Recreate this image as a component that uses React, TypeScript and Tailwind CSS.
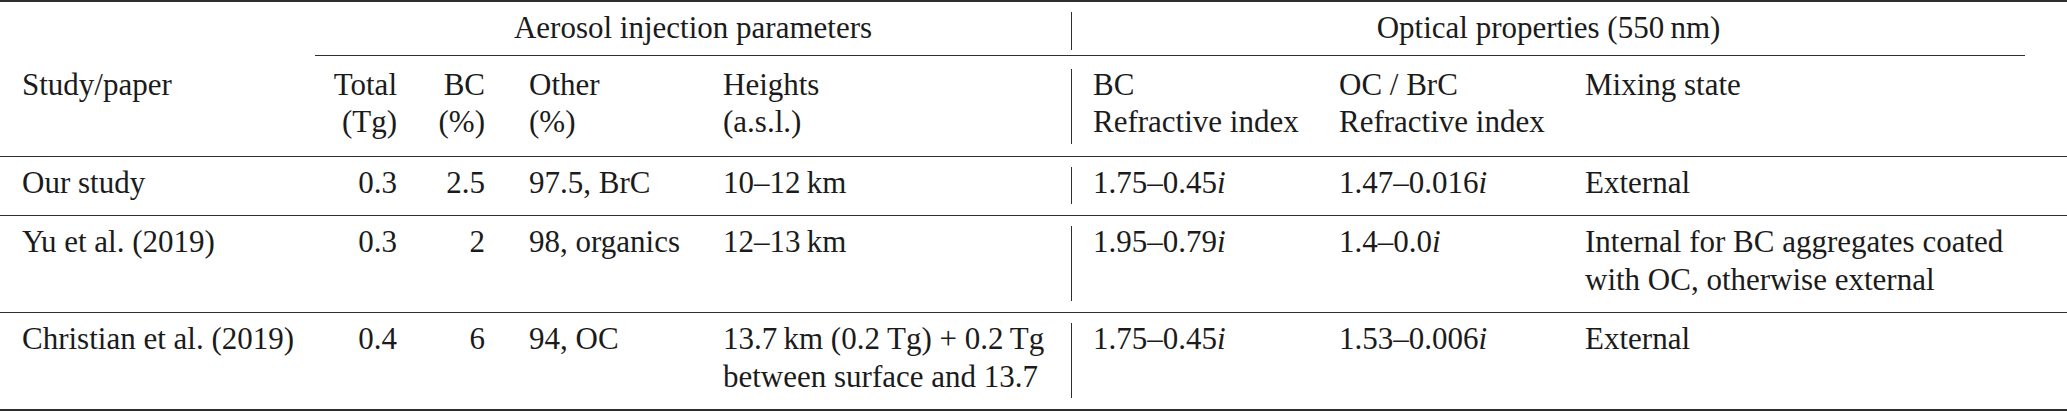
import type { ReactNode } from "react";

const studies = [
  {
    name: "Our study",
    total: "0.3",
    bc: "2.5",
    other: "97.5, BrC",
    heights: ["10–12\u2009km"],
    bcIndex: "1.75–0.45",
    ocIndex: "1.47–0.016",
    mixing: ["External"],
  },
  {
    name: "Yu et al. (2019)",
    total: "0.3",
    bc: "2",
    other: "98, organics",
    heights: ["12–13\u2009km"],
    bcIndex: "1.95–0.79",
    ocIndex: "1.4–0.0",
    mixing: ["Internal for BC aggregates coated", "with OC, otherwise external"],
  },
  {
    name: "Christian et al. (2019)",
    total: "0.4",
    bc: "6",
    other: "94, OC",
    heights: ["13.7\u2009km (0.2 Tg) + 0.2\u2009Tg", "between surface and 13.7"],
    bcIndex: "1.75–0.45",
    ocIndex: "1.53–0.006",
    mixing: ["External"],
  },
];

// text sits 3px higher than the vertical rule, like the booktabs layout
const Cell = ({ children, className = "" }: { children?: ReactNode; className?: string }) => (
  <div className={className}>
    <div className="-mt-[3px] mb-[3px] whitespace-nowrap">{children}</div>
  </div>
);

const Lines = ({ lines }: { lines: string[] }) => (
  <>
    {lines.map((line, i) => (
      <div key={i}>{line}</div>
    ))}
  </>
);

const Index = ({ value }: { value: string }) => (
  <>
    {value}
    <i>i</i>
  </>
);

const App = () => {
  return (
    <div className="w-[2067px] bg-white text-[#1b1b1b] font-['Liberation_Serif',serif] text-[31px] leading-[37.5px]">
      {/* group headers */}
      <div className="grid grid-cols-[315px_104px_88px_194px_370px_246px_246px_462px_1fr] border-t-2 border-[#2e2e2e] pt-[10px] pb-[5px]">
        <Cell />
        <Cell className="col-span-4 text-center">Aerosol injection parameters</Cell>
        <Cell className="col-span-3 border-l border-[#2e2e2e] text-center">
          Optical properties (550{"\u2009"}nm)
        </Cell>
        <Cell />
      </div>
      <div className="ml-[315px] mr-[42px] border-t border-[#2e2e2e]" />

      {/* column headers */}
      <div className="grid grid-cols-[315px_104px_88px_194px_370px_246px_246px_462px_1fr] border-b border-[#2e2e2e] pt-[13px] pb-[12px]">
        <Cell className="pl-[22px]">Study/paper</Cell>
        <Cell className="pr-[22px] text-right">
          <Lines lines={["Total", "(Tg)"]} />
        </Cell>
        <Cell className="pr-[22px] text-right">
          <Lines lines={["BC", "(%)"]} />
        </Cell>
        <Cell className="pl-[22px]">
          <Lines lines={["Other", "(%)"]} />
        </Cell>
        <Cell className="pl-[22px]">
          <Lines lines={["Heights", "(a.s.l.)"]} />
        </Cell>
        <Cell className="border-l border-[#2e2e2e] pl-[21px]">
          <Lines lines={["BC", "Refractive index"]} />
        </Cell>
        <Cell className="pl-[22px]">
          <Lines lines={["OC / BrC", "Refractive index"]} />
        </Cell>
        <Cell className="pl-[22px]">Mixing state</Cell>
        <Cell />
      </div>

      {studies.map((row, index) => (
        <div
          key={row.name}
          className={`grid grid-cols-[315px_104px_88px_194px_370px_246px_246px_462px_1fr] border-[#2e2e2e] pt-[10px] pb-[11px] ${
            index === studies.length - 1 ? "border-b-2" : "border-b"
          }`}
        >
          <Cell className="pl-[22px]">{row.name}</Cell>
          <Cell className="pr-[22px] text-right">{row.total}</Cell>
          <Cell className="pr-[22px] text-right">{row.bc}</Cell>
          <Cell className="pl-[22px]">{row.other}</Cell>
          <Cell className="pl-[22px]">
            <Lines lines={row.heights} />
          </Cell>
          <Cell className="border-l border-[#2e2e2e] pl-[21px]">
            <Index value={row.bcIndex} />
          </Cell>
          <Cell className="pl-[22px]">
            <Index value={row.ocIndex} />
          </Cell>
          <Cell className="pl-[22px]">
            <Lines lines={row.mixing} />
          </Cell>
          <Cell />
        </div>
      ))}
    </div>
  );
};

export default App;
